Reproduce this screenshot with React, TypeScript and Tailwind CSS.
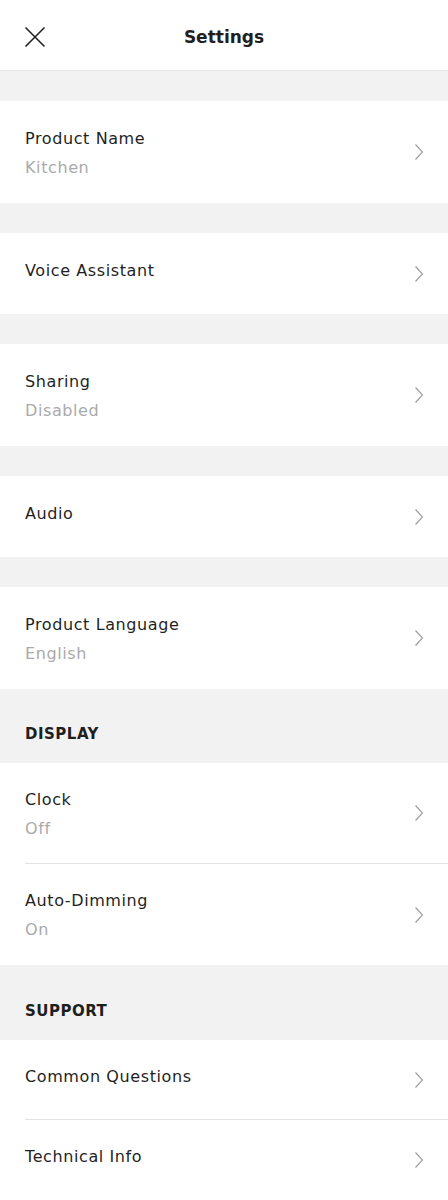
type Row = { title: string; sub?: string };

const font = { fontFamily: '"DejaVu Sans", "Open Sans", sans-serif' };

function Chevron() {
  return (
    <svg width="10" height="18" viewBox="0 0 10 18" className="shrink-0">
      <path d="M1.5 1.5 L8.5 9 L1.5 16.5" fill="none" stroke="#9a9a9a" strokeWidth="1.1" />
    </svg>
  );
}

function Item({ title, sub, divider, h }: Row & { divider?: boolean; h: string }) {
  return (
    <div className="bg-white pl-[25px]">
      <div
        className={`flex items-center justify-between pr-[24px] ${h} ${divider ? "border-b border-[#e3e3e3]" : ""}`}
      >
        <div className={`flex flex-col ${sub ? "mt-[2px]" : "mb-[6px]"}`}>
          <span className="text-[16px] leading-[24px] text-[#1f1f1f] tracking-[0.6px]">{title}</span>
          {sub && (
            <span className="mt-[5px] text-[16px] leading-[24px] text-[#aaaaaa] tracking-[0.6px]">{sub}</span>
          )}
        </div>
        <Chevron />
      </div>
    </div>
  );
}

function Gap() {
  return <div className="h-[30px] bg-[#f2f2f2]" />;
}

function SectionHeader({ label, h }: { label: string; h: string }) {
  return (
    <div className={`${h} bg-[#f2f2f2] flex items-end px-[25px] pb-[19px]`}>
      <span className="text-[15px] leading-[20px] font-bold tracking-[0.5px] text-[#1f1f1f]">{label}</span>
    </div>
  );
}

export default function App() {
  return (
    <div className="w-[448px] h-[1200px] overflow-hidden bg-white" style={font}>
      {/* 상단 바 */}
      <div className="h-[71px] flex items-center relative border-b border-[#e6e6e6] bg-white">
        <svg width="22" height="22" viewBox="0 0 22 22" className="absolute left-[24px] top-[26px]">
          <path d="M1.5 1.5 L20.5 20.5 M20.5 1.5 L1.5 20.5" stroke="#222" strokeWidth="1.6" fill="none" />
        </svg>
        <div className="flex-1 text-center text-[17px] leading-[24px] pt-[4px] font-bold text-[#1f1f1f]">Settings</div>
      </div>

      <Gap />
      <Item title="Product Name" sub="Kitchen" h="h-[102px]" />
      <Gap />
      <Item title="Voice Assistant" h="h-[81px]" />
      <Gap />
      <Item title="Sharing" sub="Disabled" h="h-[102px]" />
      <Gap />
      <Item title="Audio" h="h-[81px]" />
      <Gap />
      <Item title="Product Language" sub="English" h="h-[102px]" />

      <SectionHeader label="DISPLAY" h="h-[74px]" />
      <Item title="Clock" sub="Off" divider h="h-[101px]" />
      <Item title="Auto-Dimming" sub="On" h="h-[101px]" />

      <SectionHeader label="SUPPORT" h="h-[75px]" />
      <Item title="Common Questions" divider h="h-[80px]" />
      <Item title="Technical Info" h="h-[80px]" />
    </div>
  );
}
